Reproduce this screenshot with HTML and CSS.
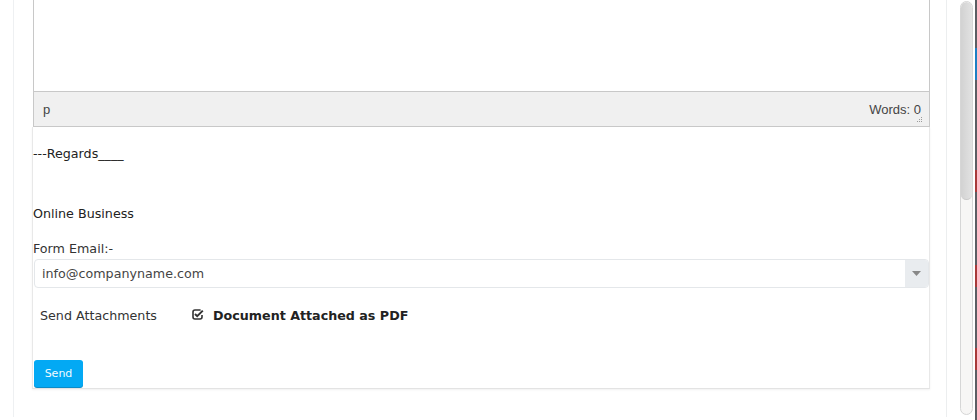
FILE: index.html
```html
<!DOCTYPE html>
<html>
<head>
<meta charset="utf-8">
<link rel="stylesheet" href="styles.css">
</head>
<body>
<div class="page">
  <div class="outer">
    <div class="card">
      <div class="editor">
        <div class="editor-body"></div>
        <div class="statusbar">
          <span class="path">p</span>
          <span class="words">Words: 0</span>
          <svg class="grip" width="6" height="6" viewBox="0 0 6 6"><g fill="#9a9a9a"><rect x="5" y="0" width="1" height="1"/><rect x="3" y="2" width="1" height="1"/><rect x="5" y="2" width="1" height="1"/><rect x="1" y="4" width="1" height="1"/><rect x="3" y="4" width="1" height="1"/><rect x="5" y="4" width="1" height="1"/></g></svg>
        </div>
      </div>
      <div class="card-body">
        <p class="regards">---Regards____</p>
        <p class="company">Online Business</p>
        <label class="label">Form Email:-</label>
        <div class="select">
          <span class="select-value">info@companyname.com</span>
          <span class="select-arrow"><svg width="9" height="5" viewBox="0 0 9 5"><path d="M0 0h9L4.5 5z" fill="#888"/></svg></span>
        </div>
        <div class="attach-row">
          <span class="attach-label">Send Attachments</span>
          <span class="attach-check">
            <svg width="12" height="11" viewBox="0 0 12 11"><path d="M8.6 1H3A2 2 0 0 0 1 3v5a2 2 0 0 0 2 2h5a2 2 0 0 0 2-2V6" fill="none" stroke="#333" stroke-width="1.6"/><path d="M3 5l2.2 2.2L10.8 1.6" fill="none" stroke="#333" stroke-width="2"/></svg>
            <b>Document Attached as PDF</b>
          </span>
        </div>
        <button class="send">Send</button>
      </div>
    </div>
  </div>
  <div class="gutter">
    <div class="scrollbar">
      <div class="thumb"></div>
    </div>
    <div class="edge">
      <div class="seg dark h48"></div>
      <div class="seg blue h32"></div>
      <div class="seg dark h90"></div>
      <div class="seg red h22"></div>
      <div class="seg dark h73"></div>
      <div class="seg red h22"></div>
      <div class="seg dark h61"></div>
      <div class="seg red h22"></div>
      <div class="seg dark h50"></div>
    </div>
  </div>
</div>
</body>
</html>
```

FILE: styles.css
```css
html, body {
  margin: 0;
  padding: 0;
  background: #fff;
}
body {
  font-family: "DejaVu Sans", Verdana, sans-serif;
  font-size: 12.7px;
  color: #333;
  overflow: hidden;
}
.page {
  display: flex;
  width: 977px;
  height: 420px;
}
.outer {
  margin-left: 13px;
  width: 933px;
  height: 417px;
  border-left: 1px solid #eef0f2;
  border-right: 1px solid #eceeef;
  padding-left: 19px;
  box-sizing: content-box;
}
.card {
  width: 897px;
}
.editor-body {
  height: 91px;
  border-left: 1px solid #c8c8c8;
  border-right: 1px solid #c8c8c8;
  background: #fff;
}
.statusbar {
  position: relative;
  height: 34px;
  border: 1px solid #c8c8c8;
  background: #f0f0f0;
  display: flex;
  align-items: center;
  justify-content: space-between;
  padding: 0 8px 0 9px;
  font-family: "Liberation Sans", Arial, sans-serif;
  font-size: 13px;
  color: #444;
}
.words {
  color: #444;
}
.grip {
  position: absolute;
  right: 7px;
  bottom: 3px;
}
.card-body {
  margin-left: -1px;
  border-left: 1px solid #e8e8e8;
  border-right: 1px solid #e8e8e8;
  border-bottom: 1px solid #e3e3e3;
  box-shadow: 0 1px 2px rgba(0,0,0,0.06);
  height: 261px;
}
.card-body p {
  margin: 0;
  line-height: 18px;
  color: #222;
}
.regards {
  padding-top: 18px;
}
.company {
  padding-top: 42px;
  color: #333;
}
.label {
  display: block;
  margin-top: 17px;
  line-height: 18px;
  color: #333;
}
.select {
  margin-top: 1px;
  margin-left: 1px;
  height: 27px;
  border: 1px solid #e4e7ea;
  border-radius: 4px;
  display: flex;
  align-items: center;
  overflow: hidden;
  background: #fff;
}
.select-value {
  flex: 1;
  padding-left: 7px;
  color: #444;
}
.select-arrow {
  width: 23px;
  height: 100%;
  background: #e9ecef;
  display: flex;
  align-items: center;
  justify-content: center;
}
.attach-row {
  display: flex;
  align-items: center;
  height: 18px;
  margin-top: 18px;
  padding-left: 7px;
  color: #333;
}
.attach-label {
  width: 152px;
}
.attach-check {
  display: flex;
  align-items: center;
  gap: 9px;
}
.attach-check svg {
  margin-top: -1px;
}
.attach-check b {
  color: #222;
  font-weight: bold;
}
.send {
  display: block;
  margin-top: 36px;
  margin-left: 1px;
  width: 49px;
  height: 27px;
  border: none;
  border-radius: 3px;
  background: #03a9f4;
  box-shadow: 0 1px 0 #0a8bc8;
  color: #f2fbff;
  font-family: "DejaVu Sans", Verdana, sans-serif;
  font-size: 11px;
  padding: 0;
}
.gutter {
  display: flex;
  padding-left: 13px;
}
.scrollbar {
  width: 11px;
  height: 412px;
  margin-top: 1px;
  border: 1px solid #d6d6d6;
  border-radius: 7px;
  background: #f7f6f5;
  overflow: hidden;
}
.thumb {
  height: 197px;
  background: linear-gradient(to right, #d2d2d2, #e2e2e2);
  border-radius: 6px;
  border-bottom: 1px solid #c9c9c9;
}
.edge {
  margin-left: 2px;
  width: 2px;
  display: flex;
  flex-direction: column;
}
.seg { width: 2px; }
.dark { background: #5b5e63; }
.blue { background: #1d7fc3; }
.red { background: #a83a3a; }
.h48 { height: 48px; }
.h32 { height: 32px; }
.h90 { height: 90px; }
.h22 { height: 22px; }
.h73 { height: 73px; }
.h61 { height: 61px; }
.h50 { height: 50px; }
```
